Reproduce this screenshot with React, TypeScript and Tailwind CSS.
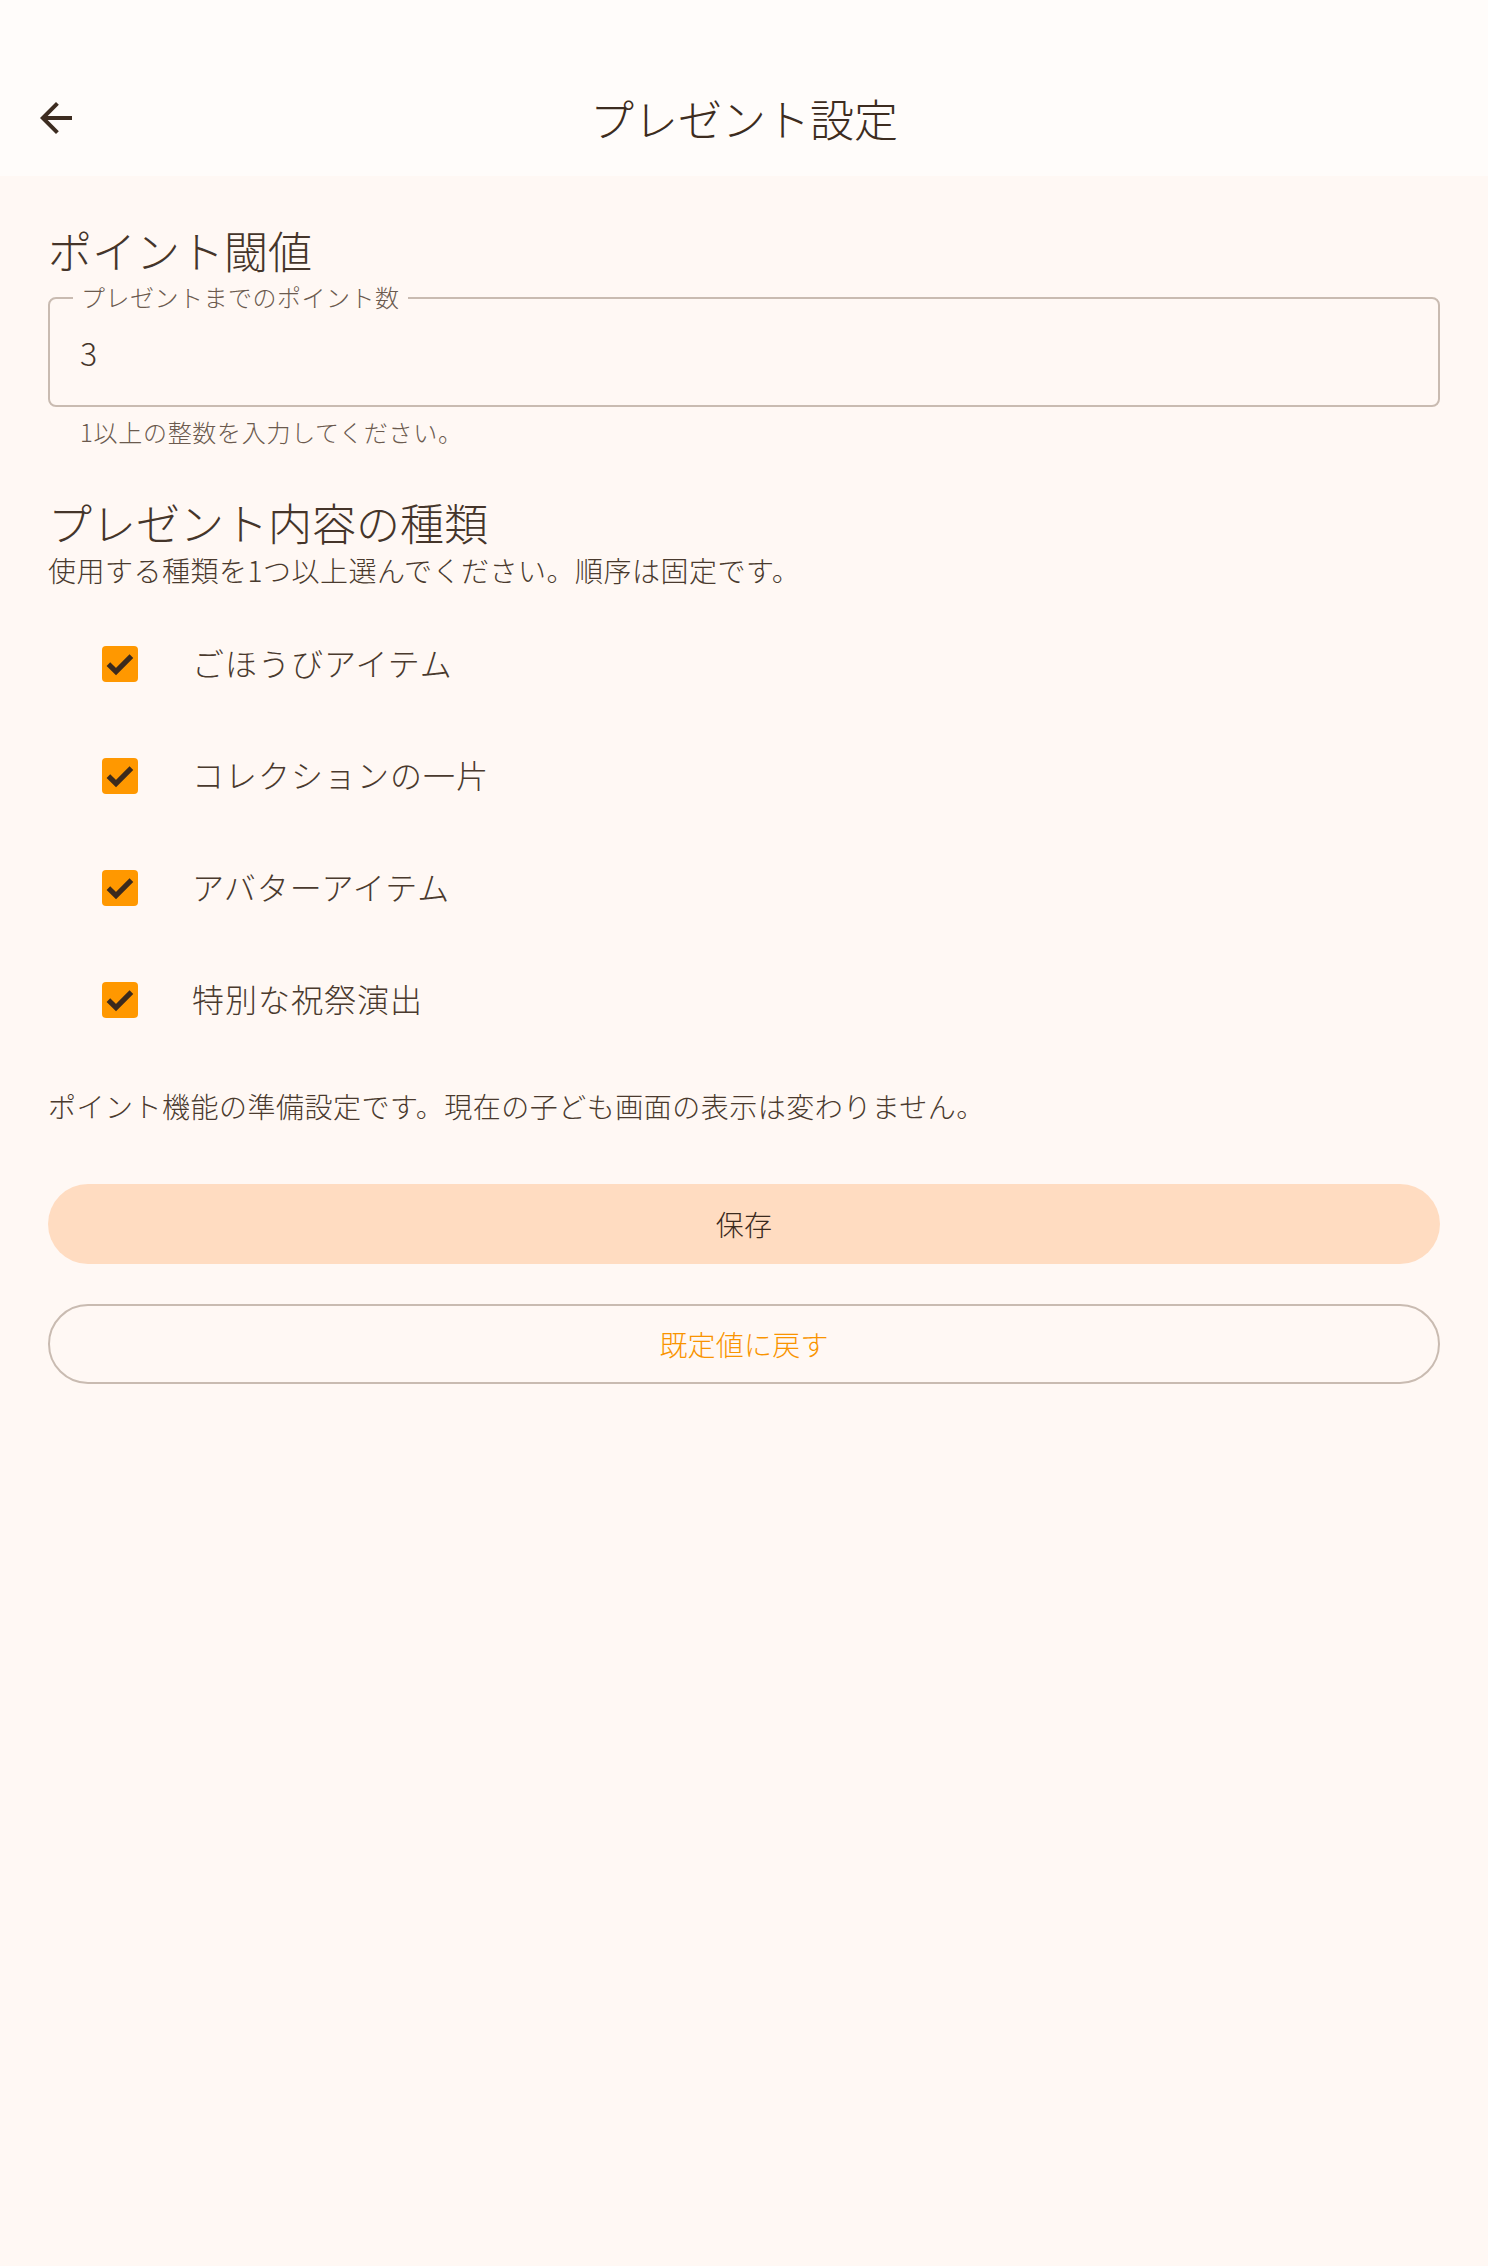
const font = { fontFamily: '"Noto Sans CJK JP", "Noto Sans", sans-serif' };

const options = ['ごほうびアイテム', 'コレクションの一片', 'アバターアイテム', '特別な祝祭演出'];

const CheckRow = ({ label }: { label: string }) => (
  <div className="flex h-[112px] items-center">
    <div className="ml-[54px] flex h-[36px] w-[36px] items-center justify-center rounded-[4px] bg-[#ff9800]">
      <svg width="36" height="36" viewBox="0 0 18 18" fill="none">
        <path d="M3.2 9.1 L7 12.8 L14.7 5.1" stroke="#3b2a1d" strokeWidth="2.6" strokeLinecap="butt" strokeLinejoin="miter" />
      </svg>
    </div>
    <span className="mb-[4px] ml-[54px] text-[32px] leading-[40px] tracking-[1px] text-[#4a3a2e]">{label}</span>
  </div>
);

export default function App() {
  return (
    <div className="min-h-[2266px] w-full bg-[#fff8f4] font-light" style={font}>
      {/* Top app bar */}
      <header className="h-[176px] bg-[#fffcfa] pb-[2px] pt-[62px]">
        <div className="grid h-[112px] grid-cols-[1fr_auto_1fr] items-center">
          <div className="pl-[32px]">
            <svg width="48" height="48" viewBox="0 0 24 24" fill="#3d2c20">
              <path d="M20 11H7.83l5.59-5.59L12 4l-8 8 8 8 1.41-1.41L7.83 13H20v-2z" />
            </svg>
          </div>
          <h1 className="text-[44px] leading-[56px] text-[#3d2c20]">プレゼント設定</h1>
          <div />
        </div>
      </header>

      <main className="px-[48px] pt-[46px]">
        <h2 className="text-[44px] leading-[56px] text-[#45352a]">ポイント閾値</h2>

        {/* Outlined text field */}
        <div className="relative mt-[19px] flex h-[110px] items-center rounded-[8px] border-2 border-[#c9bbb1] pl-[30px]">
          <span className="absolute left-[23px] top-[-18px] bg-[#fff8f4] px-[8px] text-[24px] leading-[32px] tracking-[0.5px] text-[#6b5a4e]">
            プレゼントまでのポイント数
          </span>
          <span className="text-[32px] leading-[40px] text-[#45352a]">3</span>
        </div>
        <p className="mt-[9px] pl-[32px] text-[24px] leading-[32px] tracking-[0.7px] text-[#6b5a4e]">1以上の整数を入力してください。</p>

        <h2 className="mt-[46px] text-[44px] leading-[56px] text-[#45352a]">プレゼント内容の種類</h2>
        <p className="text-[28px] leading-[40px] tracking-[0.5px] text-[#4a3a2e]">使用する種類を1つ以上選んでください。順序は固定です。</p>

        <div className="mt-[18px] flex flex-col">
          {options.map((o) => (
            <CheckRow key={o} label={o} />
          ))}
        </div>

        <p className="mt-[30px] text-[28px] leading-[40px] tracking-[0.5px] text-[#4a3a2e]">
          ポイント機能の準備設定です。現在の子ども画面の表示は変わりません。
        </p>

        <button className="mt-[58px] flex h-[80px] w-full items-center justify-center rounded-full bg-[#ffdcc1] text-[28px] leading-[40px] tracking-[0.2px] text-[#3b2a1d]">
          保存
        </button>
        <button className="mt-[40px] flex h-[80px] w-full items-center justify-center rounded-full border-2 border-[#c9bbb1] text-[28px] leading-[40px] tracking-[0.2px] text-[#f99400]">
          既定値に戻す
        </button>
      </main>
    </div>
  );
}
